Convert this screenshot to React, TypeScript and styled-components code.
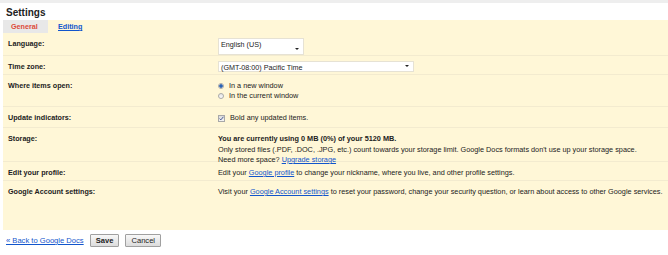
import styled, { createGlobalStyle } from 'styled-components';

const GlobalStyle = createGlobalStyle`
  body {
    margin: 0;
    background: #fff;
    font-family: "Liberation Sans", Arial, sans-serif;
    font-size: 7.3px;
    color: #222;
  }
`;

const Page = styled.div`
  width: 668px;
  height: 255px;
  overflow: hidden;
`;

const TopStrip = styled.div`
  height: 3px;
  background: #eeeeee;
`;

const Title = styled.h1`
  margin: 0;
  height: 17px;
  padding: 4px 0 0 6px;
  box-sizing: border-box;
  font-size: 10px;
  font-weight: bold;
  color: #222;
`;

const Tabs = styled.div`
  display: flex;
  align-items: stretch;
  height: 13px;
  margin-left: 3px;
  background: #fff7d7;
`;

const Tab = styled.div<{ $active?: boolean }>`
  display: flex;
  align-items: center;
  padding: 0 10px 0 ${(p) => (p.$active ? '8px' : '10px')};
  width: ${(p) => (p.$active ? '27px' : 'auto')};
  background: ${(p) => (p.$active ? '#e8e8e8' : 'transparent')};
  color: ${(p) => (p.$active ? '#dd4b39' : '#1155cc')};
  font-size: 7.2px;
  font-weight: bold;
  text-decoration: ${(p) => (p.$active ? 'none' : 'underline')};
`;

const Panel = styled.div`
  margin-left: 3px;
  height: 197px;
  background: #fff7d7;
`;

const Row = styled.div<{ $h: number }>`
  display: grid;
  grid-template-columns: 215px 1fr;
  height: ${(p) => p.$h}px;
  box-sizing: border-box;
  border-top: 1px solid #f3ebcf;
  &:first-child {
    border-top: none;
  }
`;

const Label = styled.div`
  padding: 6px 0 0 5px;
  font-weight: bold;
  font-size: 7.2px;
`;

const Value = styled.div`
  padding-top: 6px;
  line-height: 10.5px;
`;

const Select = styled.div<{ $w: number; $h: number }>`
  position: relative;
  width: ${(p) => p.$w}px;
  height: ${(p) => p.$h}px;
  margin-top: -1px;
  box-sizing: border-box;
  background: #fff;
  border: 1px solid #e6e2d4;
  padding: 1px 0 0 2px;
  font-size: 7.2px;
  line-height: 9px;
`;

const Arrow = styled.span`
  position: absolute;
  right: 4px;
  bottom: 4px;
  width: 0;
  height: 0;
  border-left: 2px solid transparent;
  border-right: 2px solid transparent;
  border-top: 2px solid #222;
`;

const Option = styled.label`
  display: flex;
  align-items: center;
  gap: 5px;
  height: 10px;
`;

const Radio = styled.span<{ $on?: boolean }>`
  width: 6px;
  height: 6px;
  border-radius: 50%;
  box-sizing: border-box;
  border: 1px solid #a9a9a9;
  background: ${(p) => (p.$on ? 'radial-gradient(circle, #2a63b5 0 1.5px, #dde6f2 2px)' : 'linear-gradient(#e6e6e6, #fafafa)')};
`;

const Check = styled.span`
  width: 7px;
  height: 7px;
  box-sizing: border-box;
  border: 1px solid #a8a8a8;
  background: linear-gradient(#dcdcdc, #f4f4f4);
  display: flex;
  align-items: center;
  justify-content: center;
`;

const Strong = styled.div`
  font-weight: bold;
`;

const Link = styled.a`
  color: #1155cc;
  text-decoration: underline;
`;

const Footer = styled.div`
  display: flex;
  align-items: center;
  gap: 6px;
  padding: 4px 0 0 6px;
  font-size: 7.6px;
`;

const Button = styled.button<{ $bold?: boolean }>`
  height: 13px;
  padding: 0 5px;
  font-family: inherit;
  font-size: 7.6px;
  font-weight: ${(p) => (p.$bold ? 'bold' : 'normal')};
  color: #222;
  border: 1px solid #a0a0a0;
  border-radius: 1px;
  background: linear-gradient(#f8f8f8, #dcdcdc);
  line-height: 11px;
`;

export default function App() {
  return (
    <Page>
      <GlobalStyle />
      <TopStrip />
      <Title>Settings</Title>
      <Tabs>
        <Tab $active>General</Tab>
        <Tab>Editing</Tab>
      </Tabs>
      <Panel>
        <Row $h={22}>
          <Label>Language:</Label>
          <Value>
            <Select $w={86} $h={17}>
              English (US)
              <Arrow />
            </Select>
          </Value>
        </Row>
        <Row $h={19}>
          <Label>Time zone:</Label>
          <Value>
            <Select $w={196} $h={11}>
              (GMT-08:00) Pacific Time
              <Arrow />
            </Select>
          </Value>
        </Row>
        <Row $h={32}>
          <Label>Where items open:</Label>
          <Value>
            <Option>
              <Radio $on />
              In a new window
            </Option>
            <Option>
              <Radio />
              In the current window
            </Option>
          </Value>
        </Row>
        <Row $h={21}>
          <Label>Update indicators:</Label>
          <Value>
            <Option>
              <Check>
                <svg width="5" height="5" viewBox="0 0 5 5">
                  <path d="M0.6 2.6 L1.8 3.9 L4.4 0.8" fill="none" stroke="#3b4e8c" strokeWidth="0.9" />
                </svg>
              </Check>
              Bold any updated items.
            </Option>
          </Value>
        </Row>
        <Row $h={34}>
          <Label>Storage:</Label>
          <Value>
            <Strong>You are currently using 0 MB (0%) of your 5120 MB.</Strong>
            <div>
              Only stored files (.PDF, .DOC, .JPG, etc.) count towards your storage limit. Google Docs formats don't use up
              your storage space.
            </div>
            <div>
              Need more space? <Link>Upgrade storage</Link>
            </div>
          </Value>
        </Row>
        <Row $h={19}>
          <Label>Edit your profile:</Label>
          <Value>
            Edit your <Link>Google profile</Link> to change your nickname, where you live, and other profile settings.
          </Value>
        </Row>
        <Row $h={50}>
          <Label>Google Account settings:</Label>
          <Value>
            Visit your <Link>Google Account settings</Link> to reset your password, change your security question, or learn
            about access to other Google services.
          </Value>
        </Row>
      </Panel>
      <Footer>
        <Link>« Back to Google Docs</Link>
        <Button $bold>Save</Button>
        <Button>Cancel</Button>
      </Footer>
    </Page>
  );
}
